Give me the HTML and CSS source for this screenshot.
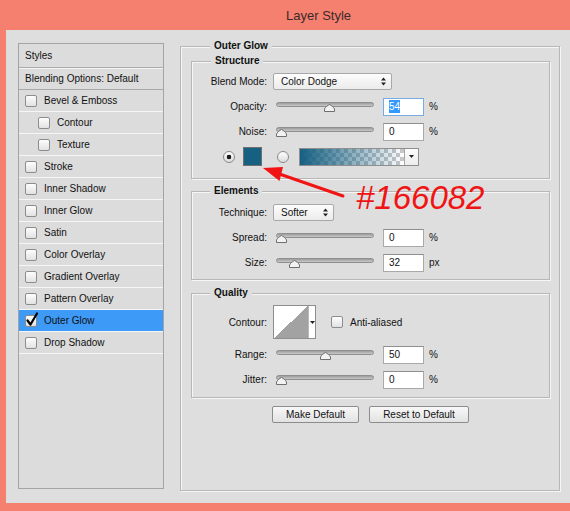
FILE: index.html
```html
<!DOCTYPE html>
<html>
<head>
<meta charset="utf-8">
<title>Layer Style</title>
<link rel="stylesheet" href="styles.css">
</head>
<body>
<div class="titlebar">Layer Style</div>
<div class="dialog">
  <div class="styles">
    <div class="st-head">Styles</div>
    <div class="st-blend">Blending Options: Default</div>
    <div class="st-item"><span class="cb"></span>Bevel &amp; Emboss</div>
    <div class="st-item sub"><span class="cb"></span>Contour</div>
    <div class="st-item sub"><span class="cb"></span>Texture</div>
    <div class="st-item"><span class="cb"></span>Stroke</div>
    <div class="st-item"><span class="cb"></span>Inner Shadow</div>
    <div class="st-item"><span class="cb"></span>Inner Glow</div>
    <div class="st-item"><span class="cb"></span>Satin</div>
    <div class="st-item"><span class="cb"></span>Color Overlay</div>
    <div class="st-item"><span class="cb"></span>Gradient Overlay</div>
    <div class="st-item"><span class="cb"></span>Pattern Overlay</div>
    <div class="st-item sel"><span class="cb"><svg class="check" width="14" height="15" viewBox="0 0 14 15"><path d="M2.5 8.5 L5.5 12.5 L12 1.5" fill="none" stroke="#000" stroke-width="2.2" stroke-linecap="round" stroke-linejoin="round"/></svg></span>Outer Glow</div>
    <div class="st-item"><span class="cb"></span>Drop Shadow</div>
  </div>

  <div class="options">
    <div class="group outer">
      <div class="legend">Outer Glow</div>

      <div class="group structure">
        <div class="legend">Structure</div>
        <div class="rows rows-structure">
          <div class="row">
            <span class="lbl">Blend Mode:</span>
            <div class="select sel-blend"><span>Color Dodge</span><svg width="5" height="9" viewBox="0 0 5 9"><path d="M0 3.5 L2.5 0.5 L5 3.5 Z M0 5.5 L2.5 8.5 L5 5.5 Z" fill="#222"/></svg></div>
          </div>
          <div class="row">
            <span class="lbl">Opacity:</span>
            <div class="slider"><div class="track"></div><div class="rail"><svg class="thumb" style="left: 55%" width="11" height="8" viewBox="0 0 11 8"><path d="M5.5 0.5 C7.5 1.5 9.5 3 10.5 5 V7.5 H0.5 V5 C1.5 3 3.5 1.5 5.5 0.5 Z" fill="#f2f2f2" stroke="#6f6f6f"/></svg></div></div>
            <div class="num focus"><span class="hl">54</span></div>
            <span class="unit">%</span>
          </div>
          <div class="row">
            <span class="lbl">Noise:</span>
            <div class="slider"><div class="track"></div><div class="rail"><svg class="thumb" style="left: 0%" width="11" height="8" viewBox="0 0 11 8"><path d="M5.5 0.5 C7.5 1.5 9.5 3 10.5 5 V7.5 H0.5 V5 C1.5 3 3.5 1.5 5.5 0.5 Z" fill="#f2f2f2" stroke="#6f6f6f"/></svg></div></div>
            <div class="num">0</div>
            <span class="unit">%</span>
          </div>
          <div class="row row-color">
            <span class="radio on"></span>
            <span class="swatch"></span>
            <span class="radio"></span>
            <div class="grad-wrap"><span class="grad"></span><span class="dd"><svg width="5" height="3" viewBox="0 0 5 3"><path d="M0 0 H5 L2.5 3 Z" fill="#222"/></svg></span></div>
          </div>
        </div>
      </div>

      <div class="group elements">
        <div class="legend">Elements</div>
        <div class="rows rows-elements">
          <div class="row">
            <span class="lbl">Technique:</span>
            <div class="select sel-tech"><span>Softer</span><svg width="5" height="9" viewBox="0 0 5 9"><path d="M0 3.5 L2.5 0.5 L5 3.5 Z M0 5.5 L2.5 8.5 L5 5.5 Z" fill="#222"/></svg></div>
          </div>
          <div class="row">
            <span class="lbl">Spread:</span>
            <div class="slider"><div class="track"></div><div class="rail"><svg class="thumb" style="left: 0%" width="11" height="8" viewBox="0 0 11 8"><path d="M5.5 0.5 C7.5 1.5 9.5 3 10.5 5 V7.5 H0.5 V5 C1.5 3 3.5 1.5 5.5 0.5 Z" fill="#f2f2f2" stroke="#6f6f6f"/></svg></div></div>
            <div class="num">0</div>
            <span class="unit">%</span>
          </div>
          <div class="row">
            <span class="lbl">Size:</span>
            <div class="slider"><div class="track"></div><div class="rail"><svg class="thumb" style="left: 15%" width="11" height="8" viewBox="0 0 11 8"><path d="M5.5 0.5 C7.5 1.5 9.5 3 10.5 5 V7.5 H0.5 V5 C1.5 3 3.5 1.5 5.5 0.5 Z" fill="#f2f2f2" stroke="#6f6f6f"/></svg></div></div>
            <div class="num">32</div>
            <span class="unit">px</span>
          </div>
        </div>
      </div>

      <div class="group quality">
        <div class="legend">Quality</div>
        <div class="rows rows-quality">
          <div class="row row-contour">
            <span class="lbl">Contour:</span>
            <div class="contour-wrap"><span class="contour"></span><span class="contour-dd"><svg width="5" height="3" viewBox="0 0 5 3"><path d="M0 0 H5 L2.5 3 Z" fill="#222"/></svg></span></div>
            <span class="cb aa"></span>
            <span class="aa-text">Anti-aliased</span>
          </div>
          <div class="row">
            <span class="lbl">Range:</span>
            <div class="slider"><div class="track"></div><div class="rail"><svg class="thumb" style="left: 50%" width="11" height="8" viewBox="0 0 11 8"><path d="M5.5 0.5 C7.5 1.5 9.5 3 10.5 5 V7.5 H0.5 V5 C1.5 3 3.5 1.5 5.5 0.5 Z" fill="#f2f2f2" stroke="#6f6f6f"/></svg></div></div>
            <div class="num">50</div>
            <span class="unit">%</span>
          </div>
          <div class="row">
            <span class="lbl">Jitter:</span>
            <div class="slider"><div class="track"></div><div class="rail"><svg class="thumb" style="left: 0%" width="11" height="8" viewBox="0 0 11 8"><path d="M5.5 0.5 C7.5 1.5 9.5 3 10.5 5 V7.5 H0.5 V5 C1.5 3 3.5 1.5 5.5 0.5 Z" fill="#f2f2f2" stroke="#6f6f6f"/></svg></div></div>
            <div class="num">0</div>
            <span class="unit">%</span>
          </div>
        </div>
      </div>

      <div class="buttons">
        <div class="btn btn-make">Make Default</div>
        <div class="btn btn-reset">Reset to Default</div>
      </div>
    </div>
  </div>
</div>

<svg class="arrow" width="90" height="40" viewBox="0 0 90 40">
  <path d="M18 13.5 L83 36" stroke="#f01414" stroke-width="3" stroke-linecap="round"/>
  <path d="M3 8 L23 7 L19.5 21 Z" fill="#f01414"/>
</svg>
<div class="note">#166082</div>
</body>
</html>
```

FILE: styles.css
```css
html, body {
  margin: 0;
  padding: 0;
}

body {
  width: 570px;
  height: 511px;
  overflow: hidden;
  position: relative;
  background: #f5806f;
  font-family: "Liberation Sans", Arial, sans-serif;
  font-size: 10px;
  color: #111;
}

.titlebar {
  height: 30px;
  line-height: 31px;
  padding-left: 286px;
  font-size: 13px;
  color: #3b2a2a;
}

.dialog {
  margin-left: 6px;
  height: 473px;
  box-sizing: border-box;
  background: #dedede;
  display: flex;
  align-items: flex-start;
  padding: 13px 0 0 12px;
}

/* ---------- left styles list ---------- */
.styles {
  width: 146px;
  height: 446px;
  box-sizing: border-box;
  border: 1px solid #a4a4a4;
  background: #dcdcdc;
  flex-shrink: 0;
}

.st-head {
  height: 23px;
  line-height: 23px;
  padding-left: 6px;
  border-bottom: 1px solid #ababab;
}

.st-blend {
  height: 21px;
  line-height: 22px;
  padding-left: 6px;
  border-bottom: 1px solid #a8a8a8;
  box-shadow: inset 0 1px 0 #f4f4f4;
}

.st-item {
  height: 21px;
  display: flex;
  align-items: center;
  gap: 7px;
  padding-left: 6px;
  border-bottom: 1px solid #f6f6f6;
}

.st-item.sub {
  padding-left: 19px;
}

.st-item.sel {
  background: #3d9af7;
}

.cb {
  position: relative;
  width: 12px;
  height: 12px;
  box-sizing: border-box;
  border: 1px solid #8c8c8c;
  border-radius: 2px;
  background: linear-gradient(#fdfdfd, #e2e2e2);
  flex-shrink: 0;
}

.cb .check {
  position: absolute;
  left: -1px;
  top: -4px;
}

/* ---------- right options ---------- */
.options {
  margin-left: 16px;
  margin-top: 3px;
  width: 380px;
}

.group {
  border: 1px solid #b7b7b7;
  box-shadow: inset 1px 1px 0 #f6f6f6, 1px 1px 0 #f6f6f6;
}

.outer {
  height: 445px;
  box-sizing: border-box;
  padding: 0 9px 0 10px;
}

.legend {
  width: fit-content;
  margin: -7px 0 0 18px;
  padding: 0 4px;
  height: 12px;
  line-height: 12px;
  background: #dedede;
  font-weight: bold;
  position: relative;
}

.outer > .legend {
  margin-left: 19px;
}

.structure {
  margin-top: 9px;
  padding-bottom: 9px;
}

.structure > .legend {
  margin-left: 19px;
}

.rows-structure {
  margin-top: 2px;
}

.elements {
  margin-top: 12px;
  padding-bottom: 4px;
}

.rows-elements {
  margin-top: 3px;
}

.quality {
  margin-top: 13px;
  padding-bottom: 5px;
}

.rows-quality {
  margin-top: 6px;
  display: flex;
  flex-direction: column;
}

.row {
  height: 25px;
  display: flex;
  align-items: center;
}

.row-contour {
  height: 34px;
  margin-bottom: 3px;
}

.lbl {
  width: 75px;
  margin-right: 6px;
  text-align: right;
  flex-shrink: 0;
}

.select {
  height: 17px;
  box-sizing: border-box;
  border: 1px solid #a8a8a8;
  border-radius: 2px;
  background: linear-gradient(#fdfdfd, #ebebeb);
  display: flex;
  align-items: center;
  justify-content: space-between;
  padding: 0 5px 0 7px;
}

.sel-blend {
  width: 119px;
}

.sel-tech {
  width: 61px;
}

.slider {
  width: 98px;
  height: 18px;
  margin-left: 3px;
  position: relative;
}

.track {
  margin-top: 4px;
  height: 5px;
  box-sizing: border-box;
  border-radius: 3px;
  border: 1px solid #8f8f8f;
  background: linear-gradient(#9c9c9c, #c9c9c9);
}

.rail {
  position: relative;
  margin: 0 5px;
}

.thumb {
  position: absolute;
  top: -3px;
  margin-left: -5px;
}

.num {
  width: 41px;
  height: 18px;
  box-sizing: border-box;
  margin-left: 9px;
  border: 1px solid #a9a9a9;
  border-top-color: #8e8e8e;
  background: #fff;
  padding-left: 5px;
  line-height: 16px;
}

.num.focus {
  border-color: #78ace0;
}

.hl {
  background: #3399ff;
  color: #fff;
  padding: 1px 0;
}

.unit {
  margin-left: 5px;
}

.row-color {
  padding-left: 31px;
}

.radio {
  width: 12px;
  height: 12px;
  box-sizing: border-box;
  border: 1px solid #8a8a8a;
  border-radius: 50%;
  background: linear-gradient(#fefefe, #dcdcdc);
  flex-shrink: 0;
}

.radio.on {
  background: radial-gradient(circle, #1a1a1a 0 2px, transparent 2.6px), linear-gradient(#fefefe, #dcdcdc);
}

.swatch {
  width: 19px;
  height: 19px;
  box-sizing: border-box;
  border: 1px solid #6f6f6f;
  background: #166082;
  margin: 0 15px 0 8px;
}

.grad-wrap {
  margin-left: 10px;
  display: flex;
  height: 18px;
  box-sizing: border-box;
  border: 1px solid #8e8e8e;
}

.grad {
  width: 104px;
  background:
    linear-gradient(to right, #166082, rgba(22, 96, 130, 0)),
    repeating-conic-gradient(#c8c8c8 0 25%, #ffffff 0 50%) 0 0 / 8px 8px;
}

.dd {
  width: 13px;
  border-left: 1px solid #a8a8a8;
  background: linear-gradient(#fdfdfd, #ececec);
  display: flex;
  align-items: center;
  justify-content: center;
}

.contour-wrap {
  display: flex;
  height: 34px;
  box-sizing: border-box;
  border: 1px solid #8e8e8e;
  background: #fff;
}

.contour {
  width: 34px;
  background: linear-gradient(to top left, #a2a2a2 50%, #ffffff 50%);
}

.contour-dd {
  width: 6px;
  border-left: 1px solid #b8b8b8;
  display: flex;
  align-items: center;
  justify-content: center;
}

.cb.aa {
  margin-left: 15px;
}

.aa-text {
  margin-left: 7px;
}

.buttons {
  margin-top: 8px;
  display: flex;
  justify-content: center;
  gap: 10px;
}

.btn {
  height: 17px;
  box-sizing: border-box;
  border: 1px solid #8c8c8c;
  border-radius: 2px;
  background: linear-gradient(#f8f8f8, #e2e2e2);
  text-align: center;
  line-height: 15px;
}

.btn-make {
  width: 87px;
}

.btn-reset {
  width: 100px;
}

/* ---------- annotation overlay ---------- */
.arrow {
  position: absolute;
  left: 260px;
  top: 160px;
}

.note {
  position: absolute;
  left: 356px;
  top: 181px;
  font-size: 33px;
  line-height: 33px;
  font-style: italic;
  color: #f01414;
}
```
